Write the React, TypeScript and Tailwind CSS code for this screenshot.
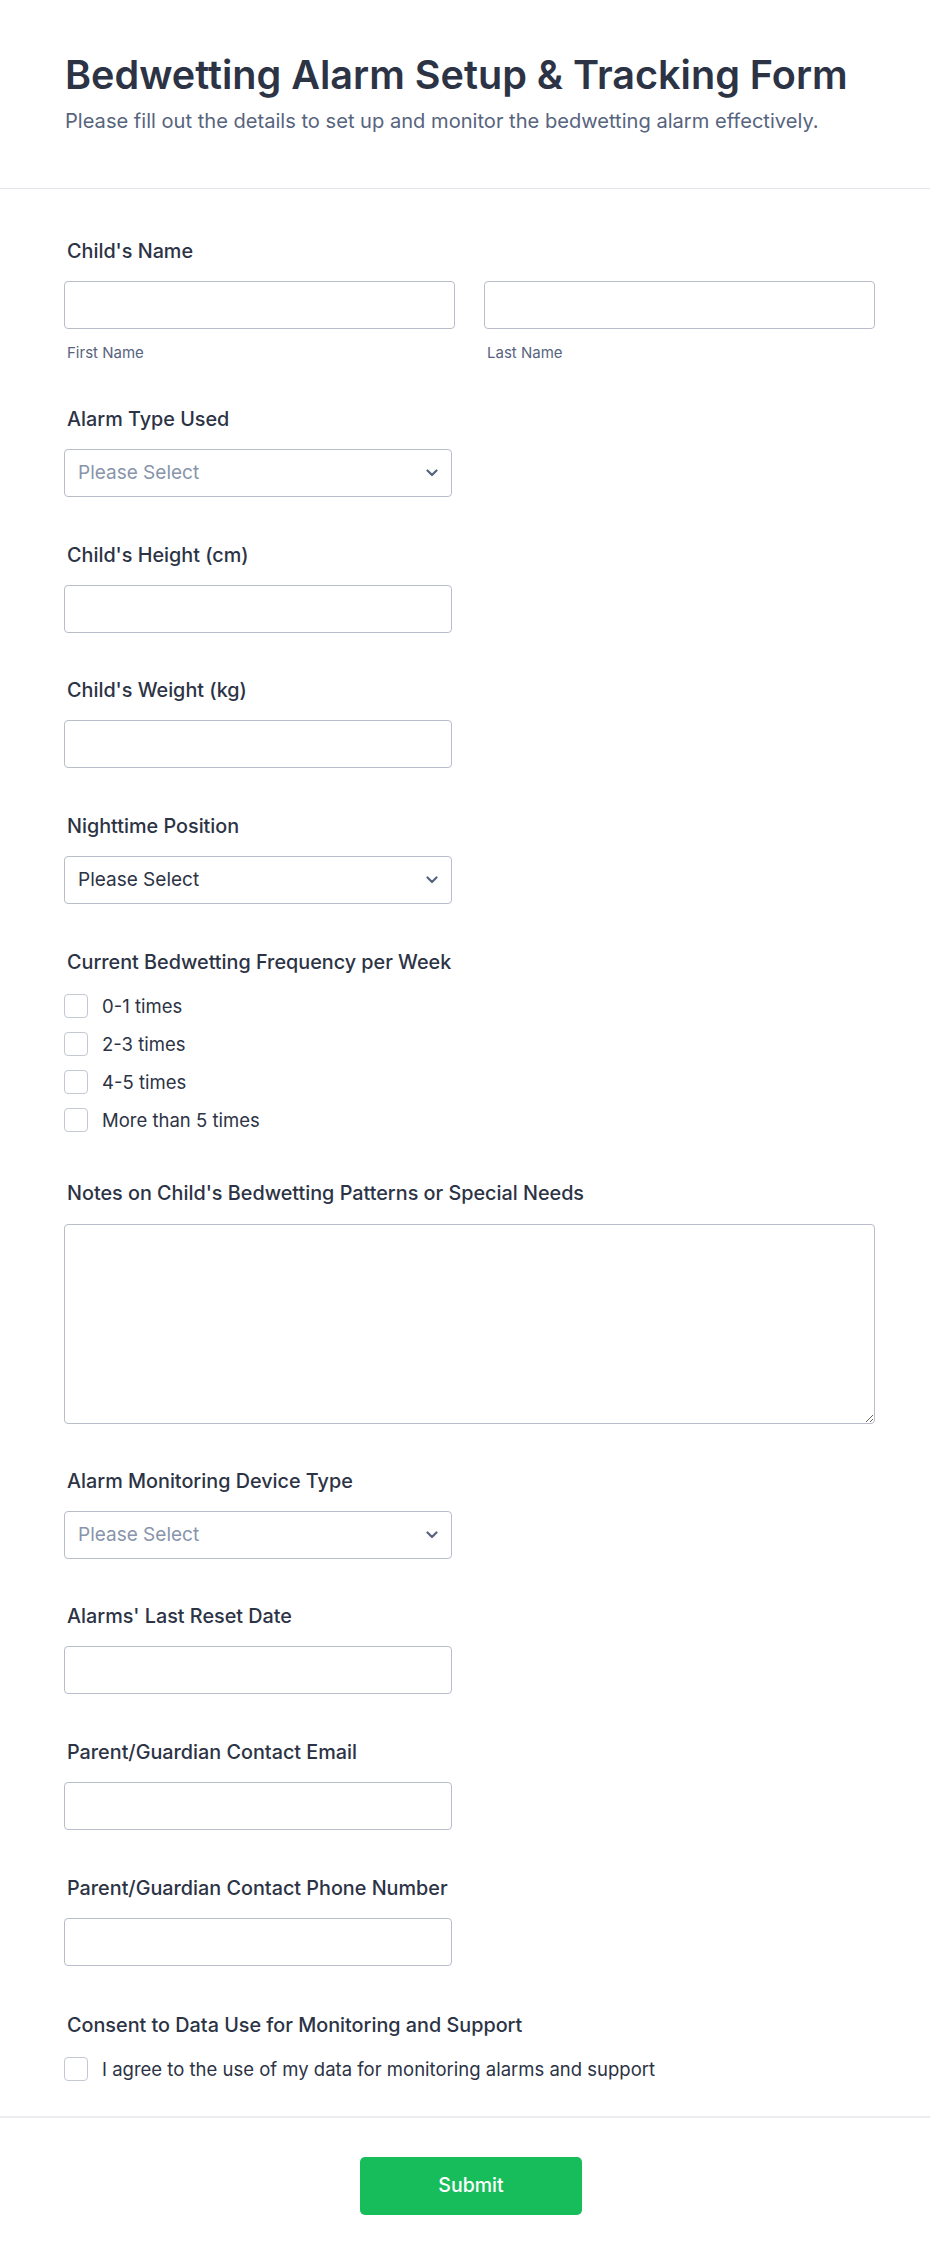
import React from 'react';

const labelCls = 'ml-[3px] block h-6 text-[19.8px] leading-6 font-medium text-[#2c3345]';
const boxCls =
  'block h-[48px] rounded-[4px] border border-[#b8bdc9] bg-white px-[13px] text-[19px] text-[#2c3345] outline-none';

const Chevron = () => (
  <svg
    width="12"
    height="8"
    viewBox="0 0 12 8"
    fill="none"
    className="pointer-events-none absolute right-[14px] top-1/2 -translate-y-1/2"
  >
    <path d="M1.5 1.5l4.5 4.5 4.5-4.5" stroke="#57647e" strokeWidth="2.2" strokeLinecap="round" strokeLinejoin="round" />
  </svg>
);

const SelectBox = ({ muted }: { muted?: boolean }) => (
  <div className="relative mt-[18px] w-[388px]">
    <select
      className={`${boxCls} w-full appearance-none ${muted ? 'text-[#8894ab]' : 'text-[#2c3345]'}`}
      defaultValue=""
    >
      <option value="">Please Select</option>
    </select>
    <Chevron />
  </div>
);

const TextBox = () => <input type="text" className={`${boxCls} mt-[18px] w-[388px]`} />;

const Check = ({ text }: { text: string }) => (
  <label className="flex items-center gap-[14px]">
    <span className="h-6 w-6 shrink-0 rounded-[4px] border border-[#c3c8d2] bg-white" />
    <span className="text-[18.5px] leading-6 text-[#2c3345]">{text}</span>
  </label>
);

const Field = ({ label, children, mb = 'mb-[46px]' }: { label: string; children: React.ReactNode; mb?: string }) => (
  <div className={mb}>
    <span className={labelCls}>{label}</span>
    {children}
  </div>
);

export default function App() {
  return (
    <div className="min-h-[2266px] w-[930px] bg-white" style={{ fontFamily: 'Inter, "Noto Sans", sans-serif' }}>
      {/* Header */}
      <div className="border-b border-[#e3e5ea] pb-[53px] pl-[65px] pt-[51px]">
        <h1 className="text-[39.6px] font-semibold leading-[48px] text-[#2c3345]">
          Bedwetting Alarm Setup &amp; Tracking Form
        </h1>
        <p className="mt-[8px] text-[20.1px] leading-7 text-[#57647e]">
          Please fill out the details to set up and monitor the bedwetting alarm effectively.
        </p>
      </div>

      {/* Fields */}
      <div className="ml-[64px] w-[811px] pt-[50px]">
        <Field label="Child's Name" mb="mb-[44px]">
          <div className="mt-[18px] grid grid-cols-2 gap-[29px]">
            <div>
              <input type="text" className={`${boxCls} w-full`} />
              <span className="ml-[3px] mt-[14px] block text-[15px] leading-5 text-[#57647e]">First Name</span>
            </div>
            <div>
              <input type="text" className={`${boxCls} w-full`} />
              <span className="ml-[3px] mt-[14px] block text-[15px] leading-5 text-[#57647e]">Last Name</span>
            </div>
          </div>
        </Field>

        <Field label="Alarm Type Used">
          <SelectBox muted />
        </Field>

        <Field label="Child's Height (cm)" mb="mb-[45px]">
          <TextBox />
        </Field>

        <Field label="Child's Weight (kg)">
          <TextBox />
        </Field>

        <Field label="Nighttime Position">
          <SelectBox />
        </Field>

        <Field label="Current Bedwetting Frequency per Week" mb="mb-[49px]">
          <div className="mt-[20px] flex flex-col gap-[14px]">
            <Check text="0-1 times" />
            <Check text="2-3 times" />
            <Check text="4-5 times" />
            <Check text="More than 5 times" />
          </div>
        </Field>

        <Field label="Notes on Child's Bedwetting Patterns or Special Needs" mb="mb-[45px]">
          <textarea className="mt-[19px] block h-[200px] w-full rounded-[4px] border border-[#b8bdc9] bg-white px-[14px] py-[10px] text-[16px] outline-none" />
        </Field>

        <Field label="Alarm Monitoring Device Type" mb="mb-[45px]">
          <SelectBox muted />
        </Field>

        <Field label="Alarms' Last Reset Date">
          <TextBox />
        </Field>

        <Field label="Parent/Guardian Contact Email">
          <TextBox />
        </Field>

        <Field label="Parent/Guardian Contact Phone Number" mb="mb-[47px]">
          <TextBox />
        </Field>

        <Field label="Consent to Data Use for Monitoring and Support" mb="mb-[35px]">
          <div className="mt-[20px]">
            <Check text="I agree to the use of my data for monitoring alarms and support" />
          </div>
        </Field>
      </div>

      {/* Footer */}
      <div className="flex justify-center border-t-2 border-[#ebedf1] pb-[51px] pt-[39px]">
        <button
          type="button"
          className="ml-[12px] h-[58px] w-[222px] rounded-[5px] bg-[#18bd5b] text-[19.5px] font-medium text-white"
        >
          Submit
        </button>
      </div>
    </div>
  );
}
